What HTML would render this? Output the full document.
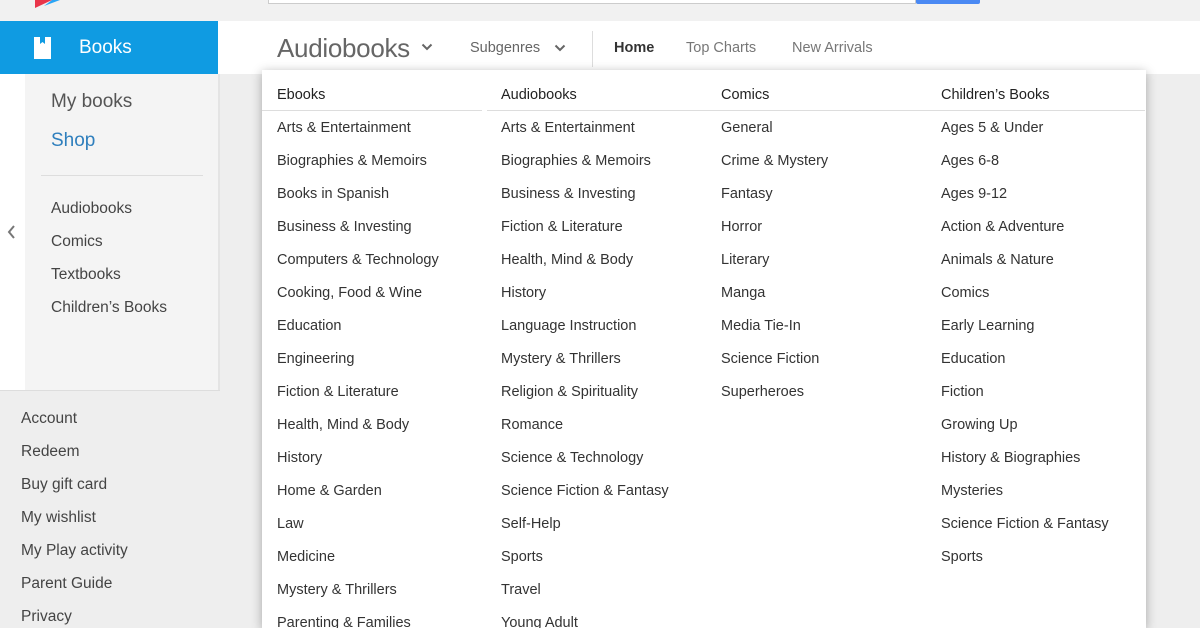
<!DOCTYPE html>
<html><head><meta charset="utf-8"><style>
*{margin:0;padding:0;box-sizing:border-box}
html,body{width:1200px;height:628px;overflow:hidden}
body{background:#eeeeee;font-family:"Liberation Sans",Arial,sans-serif;position:relative;color:#333}
.a{position:absolute;white-space:nowrap}
.top{left:0;top:0;width:1200px;height:21px;background:#f1f1f1}
.hdr{left:0;top:21px;width:1200px;height:53px;background:#fff}
.blue{left:0;top:21px;width:218px;height:53px;background:#0f9be2}
.side{left:25px;top:74px;width:194px;height:316px;background:#f4f4f4}
.strip{left:0;top:74px;width:25px;height:316px;background:#fff}
.bot{left:0;top:390px;width:220px;height:238px;background:#eeeeee;border-top:1px solid #ddd}
.dd{left:262px;top:70px;width:884px;height:558px;background:#fff;box-shadow:0 2px 10px rgba(0,0,0,.3)}
.it{font-size:14.5px;color:#333}
.hd{font-size:14.5px;color:#222}
.sb{font-size:15.5px;color:#444}
</style></head><body>
<div class="a top"></div>
<svg class="a" style="left:30px;top:0" width="80" height="10"><path d="M5 0 L22 0 L5 8Z" fill="#e9354a"/><path d="M22 0 L30 0 L14 6Z" fill="#2aa5f5"/></svg>
<div class="a" style="left:268px;top:-2px;width:648px;height:6px;background:#fff;border:1px solid #ccc"></div>
<div class="a" style="left:916px;top:0;width:64px;height:4px;background:#4a89f3;border-radius:0 0 2px 2px"></div>
<div class="a hdr"></div>
<div class="a blue"></div>
<svg class="a" style="left:33px;top:37px" width="20" height="22"><path d="M1 0H18V22H1Z" fill="#fff"/><path d="M7 0V7L9.5 5L12 7V0Z" fill="#0f9be2"/></svg>
<div class="a" style="left:79px;top:37px;font-size:19px;color:#fff">Books</div>
<div class="a" style="left:277px;top:33px;font-size:26px;color:#666;letter-spacing:-0.3px">Audiobooks</div>
<svg class="a" style="left:421px;top:43px" width="12" height="8"><path d="M1.5 1.5L6 6L10.5 1.5" stroke="#666" stroke-width="2" fill="none"/></svg>
<div class="a" style="left:470px;top:40px;font-size:14.5px;color:#666">Subgenres</div>
<svg class="a" style="left:554px;top:44px" width="12" height="8"><path d="M1.5 1.5L6 6L10.5 1.5" stroke="#666" stroke-width="2" fill="none"/></svg>
<div class="a" style="left:592px;top:31px;width:1px;height:36px;background:#ddd"></div>
<div class="a" style="left:614px;top:40px;font-size:14.5px;color:#333;font-weight:bold">Home</div>
<div class="a" style="left:686px;top:40px;font-size:14.5px;color:#777">Top Charts</div>
<div class="a" style="left:792px;top:40px;font-size:14.5px;color:#777">New Arrivals</div>
<div class="a strip"></div>
<div class="a side"></div>
<div class="a" style="left:218px;top:74px;width:2px;height:554px;background:#e4e4e4"></div>
<div class="a" style="left:51px;top:91px;font-size:19px;color:#555">My books</div>
<div class="a" style="left:51px;top:130px;font-size:19px;color:#2f7fbd">Shop</div>
<div class="a" style="left:41px;top:175px;width:162px;height:1px;background:#ddd"></div>
<div class="a sb" style="left:51px;top:200px">Audiobooks</div>
<div class="a sb" style="left:51px;top:233px">Comics</div>
<div class="a sb" style="left:51px;top:266px">Textbooks</div>
<div class="a sb" style="left:51px;top:299px">Children’s Books</div>
<svg class="a" style="left:6px;top:224px" width="10" height="16"><path d="M8 2L3 8L8 14" stroke="#777" stroke-width="2" fill="none"/></svg>
<div class="a bot"></div>
<div class="a sb" style="left:21px;top:410px">Account</div>
<div class="a sb" style="left:21px;top:443px">Redeem</div>
<div class="a sb" style="left:21px;top:476px">Buy gift card</div>
<div class="a sb" style="left:21px;top:509px">My wishlist</div>
<div class="a sb" style="left:21px;top:542px">My Play activity</div>
<div class="a sb" style="left:21px;top:575px">Parent Guide</div>
<div class="a sb" style="left:21px;top:608px">Privacy</div>
<div class="a dd"></div>
<div class="a" style="left:262px;top:110px;width:220px;height:1px;background:#ddd"></div>
<div class="a" style="left:487px;top:110px;width:658px;height:1px;background:#ddd"></div>
<div class="a hd" style="left:277px;top:87px">Ebooks</div>
<div class="a hd" style="left:501px;top:87px">Audiobooks</div>
<div class="a hd" style="left:721px;top:87px">Comics</div>
<div class="a hd" style="left:941px;top:87px">Children’s Books</div>
<div class="a it" style="left:277px;top:112px;line-height:33px">Arts &amp; Entertainment<br>Biographies &amp; Memoirs<br>Books in Spanish<br>Business &amp; Investing<br>Computers &amp; Technology<br>Cooking, Food &amp; Wine<br>Education<br>Engineering<br>Fiction &amp; Literature<br>Health, Mind &amp; Body<br>History<br>Home &amp; Garden<br>Law<br>Medicine<br>Mystery &amp; Thrillers<br>Parenting &amp; Families</div>
<div class="a it" style="left:501px;top:112px;line-height:33px">Arts &amp; Entertainment<br>Biographies &amp; Memoirs<br>Business &amp; Investing<br>Fiction &amp; Literature<br>Health, Mind &amp; Body<br>History<br>Language Instruction<br>Mystery &amp; Thrillers<br>Religion &amp; Spirituality<br>Romance<br>Science &amp; Technology<br>Science Fiction &amp; Fantasy<br>Self-Help<br>Sports<br>Travel<br>Young Adult</div>
<div class="a it" style="left:721px;top:112px;line-height:33px">General<br>Crime &amp; Mystery<br>Fantasy<br>Horror<br>Literary<br>Manga<br>Media Tie-In<br>Science Fiction<br>Superheroes</div>
<div class="a it" style="left:941px;top:112px;line-height:33px">Ages 5 &amp; Under<br>Ages 6-8<br>Ages 9-12<br>Action &amp; Adventure<br>Animals &amp; Nature<br>Comics<br>Early Learning<br>Education<br>Fiction<br>Growing Up<br>History &amp; Biographies<br>Mysteries<br>Science Fiction &amp; Fantasy<br>Sports</div>
</body></html>
